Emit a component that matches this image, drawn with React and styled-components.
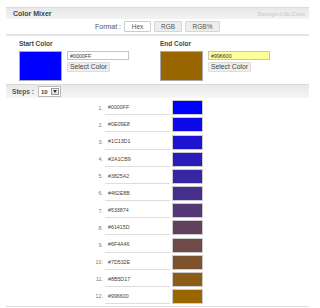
import React from 'react'
import styled, { createGlobalStyle } from 'styled-components'

const GlobalStyle = createGlobalStyle`
  body {
    margin: 0;
    background: #fff;
    font-family: "Liberation Sans", Arial, sans-serif;
    color: #333;
  }
`

const Panel = styled.section`
  width: 303px;
  margin: 7px 0 0 6px;
`

const Header = styled.header`
  height: 12px;
  display: flex;
  align-items: center;
  justify-content: space-between;
  padding: 0 4px 0 7px;
  background: linear-gradient(#e8e8e8, #f3f3f3);
  border-top: 1px solid #dadada;
  box-sizing: border-box;
`

const Title = styled.h1`
  margin: 0;
  font-size: 7px;
  font-weight: bold;
  color: #444;
`

const Brand = styled.span`
  font-size: 6.2px;
  font-weight: bold;
  color: #cfcfcf;
`

const FormatRow = styled.div`
  display: flex;
  justify-content: center;
  align-items: center;
  gap: 3px;
  height: 15px;
  border-bottom: 2px solid #e4e4e4;
  font-size: 7px;
  color: #555;
`

const FmtButton = styled.button`
  width: ${p => p.w}px;
  height: 11px;
  padding: 0;
  font-family: inherit;
  font-size: 6.5px;
  color: #555;
  background: ${p => (p.active ? '#fff' : '#eee')};
  border: 1px solid ${p => (p.active ? '#ccc' : '#d6d6d6')};
  border-radius: 1px;
`

const ColorsRow = styled.div`
  display: grid;
  grid-template-columns: 141px 1fr;
  height: 48px;
  padding: 4px 0 0 13px;
  box-sizing: border-box;
`

const Label = styled.div`
  font-size: 6.5px;
  font-weight: bold;
  color: #444;
  height: 8px;
  margin-bottom: 3px;
`

const PickerBody = styled.div`
  display: flex;
  gap: 5px;
`

const BigSwatch = styled.div`
  width: 43px;
  height: 30px;
  box-sizing: border-box;
  border: 1px solid #aaa;
  background: ${p => p.color};
`

const Controls = styled.div`
  display: flex;
  flex-direction: column;
  align-items: flex-start;
  gap: 2px;
`

const HexInput = styled.input`
  width: 62px;
  height: 9px;
  box-sizing: border-box;
  padding: 0 2px;
  font-family: inherit;
  font-size: 5.3px;
  color: #333;
  border: 1px solid #c4c4c4;
  background: ${p => p.bg || '#fff'};
  outline: none;
`

const SelectButton = styled.button`
  height: 10px;
  padding: 0 2px;
  font-family: inherit;
  font-size: 6.8px;
  color: #444;
  background: #eee;
  border: 1px solid #ddd;
  border-radius: 1px;
  line-height: 1;
`

const StepsBar = styled.div`
  height: 14px;
  display: flex;
  align-items: center;
  gap: 4px;
  padding-left: 6px;
  background: linear-gradient(#e9e9e9, #f6f6f6);
  border-top: 1px solid #d9d9d9;
  box-sizing: border-box;
  font-size: 6.6px;
  font-weight: bold;
  color: #555;
`

const StepSelect = styled.div`
  display: flex;
  align-items: center;
  height: 9px;
  border: 1px solid #bbb;
  background: #fff;
  font-size: 6px;
  font-weight: bold;
  color: #444;
`

const StepValue = styled.span`
  padding: 0 3px 0 2px;
`

const DropButton = styled.span`
  width: 8px;
  height: 7px;
  margin-right: 1px;
  display: flex;
  align-items: center;
  justify-content: center;
  border: 1px solid #999;
  background: linear-gradient(#fafafa, #ddd);
  box-sizing: border-box;
`

const List = styled.ol`
  list-style: none;
  margin: 0;
  padding: 0 0 0 87px;
`

const Row = styled.li`
  display: flex;
  align-items: stretch;
  height: 17.18px;
  gap: 2px;
`

const Num = styled.span`
  width: 10px;
  align-self: center;
  margin-top: 2px;
  text-align: right;
  font-size: 5.3px;
  color: #777;
`

const HexCell = styled.span`
  width: 62px;
  display: flex;
  align-items: center;
  padding: 2px 0 0 3px;
  border-bottom: 1px solid #ddd;
  font-size: 5.3px;
  color: #444;
`

const Swatch = styled.span`
  width: 31px;
  height: 15px;
  margin-top: auto;
  box-sizing: border-box;
  border: 1px solid #ccc;
  background: ${p => p.color};
`

const Footer = styled.div`
  margin-top: 2px;
  border-top: 1px solid #ddd;
`

const steps = [
  '#0000FF', '#0E09E8', '#1C13D1', '#2A1CB9', '#3825A2', '#462E8B',
  '#533874', '#61415D', '#6F4A46', '#7D532E', '#8B5D17', '#996600',
]

function ColorPicker({ label, color, inputBg }) {
  return (
    <div>
      <Label>{label}</Label>
      <PickerBody>
        <BigSwatch color={color} />
        <Controls>
          <HexInput defaultValue={color} bg={inputBg} />
          <SelectButton>Select Color</SelectButton>
        </Controls>
      </PickerBody>
    </div>
  )
}

export default function App() {
  return (
    <>
      <GlobalStyle />
      <Panel>
        <Header>
          <Title>Color Mixer</Title>
          <Brand>Design-Lib.Com</Brand>
        </Header>
        <FormatRow>
          <span>Format :</span>
          <FmtButton w={27} active>Hex</FmtButton>
          <FmtButton w={28}>RGB</FmtButton>
          <FmtButton w={35}>RGB%</FmtButton>
        </FormatRow>
        <ColorsRow>
          <ColorPicker label="Start Color" color="#0000FF" />
          <ColorPicker label="End Color" color="#996600" inputBg="#ffff99" />
        </ColorsRow>
        <StepsBar>
          <span>Steps :</span>
          <StepSelect>
            <StepValue>10</StepValue>
            <DropButton>
              <svg width="4" height="3" viewBox="0 0 4 3">
                <path d="M0 0h4L2 3z" fill="#333" />
              </svg>
            </DropButton>
          </StepSelect>
        </StepsBar>
        <List>
          {steps.map((c, i) => (
            <Row key={c}>
              <Num>{i + 1}.</Num>
              <HexCell>{c}</HexCell>
              <Swatch color={c} />
            </Row>
          ))}
        </List>
        <Footer />
      </Panel>
    </>
  )
}
